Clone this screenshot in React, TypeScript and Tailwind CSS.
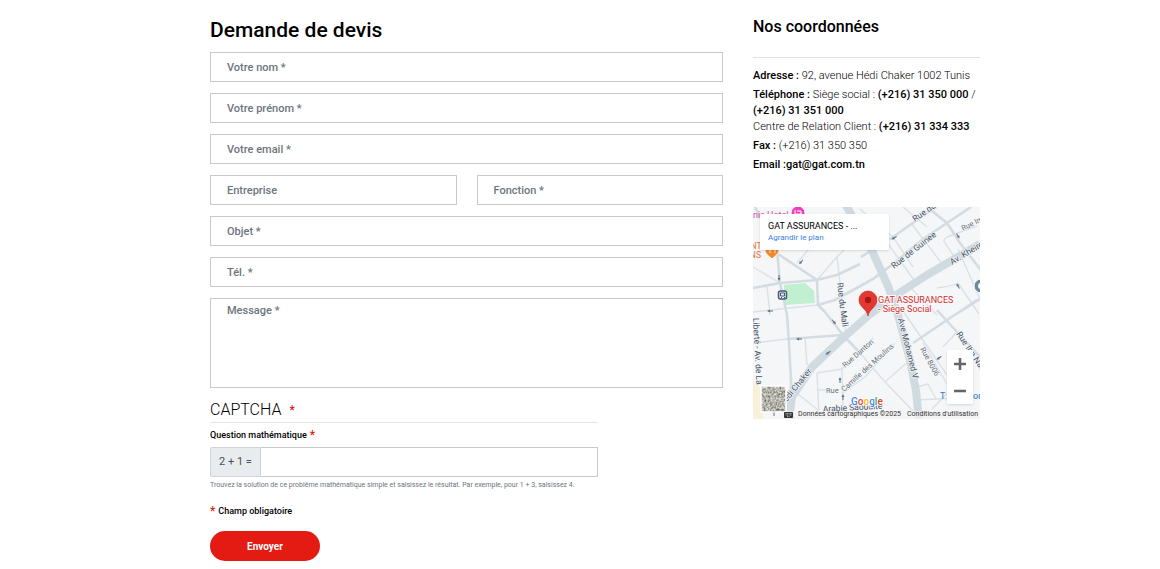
import type { ReactNode } from "react";

const fieldClass =
  "block h-[30px] w-full border border-[#c9c9c9] bg-white px-4 text-[11px] font-medium text-[#495057] outline-none placeholder:text-[#6c757d] placeholder:opacity-100";

function Field({ label, name, type = "text" }: { label: string; name: string; type?: string }) {
  return <input className={fieldClass} type={type} name={name} aria-label={label} placeholder={label} />;
}

function Star() {
  return <span className="text-xs leading-none font-medium text-[#e41b13]">*</span>;
}

function QuoteForm() {
  return (
    <form className="min-w-0" onSubmit={(e) => e.preventDefault()}>
      <h1 className="pt-4 pb-2 text-[21px] leading-7 font-medium">Demande de devis</h1>
      <div className="grid gap-[11px]">
        <Field label="Votre nom *" name="nom" />
        <Field label="Votre prénom *" name="prenom" />
        <Field label="Votre email *" name="email" type="email" />
        <div className="grid grid-cols-2 gap-5">
          <Field label="Entreprise" name="entreprise" />
          <Field label="Fonction *" name="fonction" />
        </div>
        <Field label="Objet *" name="objet" />
        <Field label="Tél. *" name="tel" type="tel" />
        <textarea
          className="block h-[90px] w-full resize-none border border-[#c9c9c9] px-4 py-1 text-[11px] leading-4 font-medium outline-none placeholder:text-[#6c757d] placeholder:opacity-100"
          name="message"
          aria-label="Message *"
          placeholder="Message *"
        />
      </div>
      <fieldset className="max-w-[388px] pt-2">
        <legend className="w-full pt-2">
          <span className="flex items-center gap-2 border-b border-[#e5e5e5] pt-1 pb-0.5 text-base leading-5 font-light">
            CAPTCHA <Star />
          </span>
        </legend>
        <label htmlFor="captcha" className="-mt-1 flex items-center gap-[3px] pb-1 text-[9px] leading-4 font-medium">
          Question mathématique <Star />
        </label>
        <div className="flex h-[30px]">
          <span className="flex items-center rounded-l-xs border border-[#ced4da] bg-[#e9ecef] px-2 text-[11px] text-[#495057]">
            2 + 1 =
          </span>
          <input id="captcha" name="captcha" className="min-w-0 flex-1 border border-l-0 border-[#c9c9c9] px-2 text-[11px] outline-none" />
        </div>
        <p className="pt-0.5 text-[7px] leading-3 text-[#6c757d]">
          Trouvez la solution de ce problème mathématique simple et saisissez le résultat. Par exemple, pour 1 + 3, saisissez 4.
        </p>
      </fieldset>
      <p className="flex items-center gap-[3px] py-3 text-[9px] leading-4 font-medium">
        <Star /> Champ obligatoire
      </p>
      <button type="submit" className="h-[30px] rounded-full bg-[#e41b13] px-[37px] text-[10px] font-bold text-white">
        Envoyer
      </button>
    </form>
  );
}

const minorRoads = [
  "M14 80 17 108", "M0 105 65 98", "M44 56 62 35", "M64 73 84 50 98 36", "M84 50 93 128",
  "M52 131 54 158", "M64 166 66 208", "M64 166 89 162 90 208", "M65 183 74 183", "M89 162 120 131",
  "M90 186 112 170 142 136", "M107 146 132 175 160 204", "M132 175 157 153", "M124 21 163 76",
  "M140 30 160 60", "M158 16 190 58", "M107 2 140 30", "M192 36Q189 33 194 30L224 19", "M192 36 205 55",
  "M157 80 184 108", "M184 81Q200 79 205 76L226 107", "M160 136 197 111 224 92", "M148 101 194 168",
  "M162 193 227 190", "M164 180 175 177 183 192", "M170 136 194 177", "M0 136 34 132", "M10 8 24 43",
  "M150 0 174 20", "M204 125 190 140", "M179 202 205 175", "M205 42 227 92", "M0 60 27 76", "M36 180 65 203",
];
const mediumRoads = [
  "M24 43 27 76 34 108 36 136 40 212", "M19 43 64 73 65 98 72 105 90 128 107 146", "M0 81 27 76 64 73 84 68 107 57",
  "M65 98 82 93 120 72 140 57 170 32 194 16 218 0", "M34 132 90 128", "M108 50 140 30 174 6 184 0",
  "M174 0 194 16 207 36 230 66", "M184 103 204 125 227 150", "M2 0 24 43", "M160 136 197 111 227 92",
];

const arrows: [number, number, number][] = [
  [48, 55, 130], [26, 71, 90], [17, 104, 180], [81, 115, 50], [46, 132, 180], [75, 146, 145], [141, 31, 150],
  [205, 29, 60], [205, 79, -120], [186, 151, 145], [87, 173, -90], [90, 190, -90], [21, 206, -90],
];

function MapLabel({ x, y, angle, children }: { x: number; y: number; angle: number; children: ReactNode }) {
  return <text x={x} y={y} transform={`rotate(${angle} ${x} ${y})`}>{children}</text>;
}

function MapDrawing() {
  return (
    <svg viewBox="0 0 227 212" className="block w-full" role="img" aria-label="Plan du quartier" fontFamily="Roboto, sans-serif">
      <defs>
        <filter id="aerial" x="0" y="0" width="1" height="1">
          <feTurbulence type="fractalNoise" baseFrequency="0.45" numOctaves="3" seed="8" />
          <feColorMatrix values="1.1 0 0 0 -.1  1.1 0 0 0 -.1  1.1 0 0 0 -.14  0 0 0 0 1" />
        </filter>
      </defs>
      <rect width="227" height="212" fill="#f5f6f7" />
      <path d="M0 173 9 184 10 212H0Z" fill="#f8f0d8" />
      <path d="M31 78 52 76 61 84 62 96 31 98Z" fill="#c1efd1" />
      <g fill="none" stroke="#dbe1e7" strokeLinejoin="round">
        {minorRoads.map((d) => <path key={d} d={d} strokeWidth="1.4" />)}
        {mediumRoads.map((d) => <path key={d} d={d} strokeWidth="2.6" stroke="#d4dce3" />)}
        <g stroke="#d0dae1">
          <path d="M36 212 39 190 59 160 91 130 116 108 143 88 174 68 227 37" strokeWidth="8" />
          <path d="M92 -3 116 37 135 79 145 108 157 153 163 184 166 212" strokeWidth="8" />
        </g>
      </g>
      <g fill="#60717f">
        {arrows.map(([x, y, a]) => (
          <path key={`${x}-${y}`} d="M-3-.5H0V-1.5L3 0 0 1.5V.5H-3Z" transform={`translate(${x} ${y}) rotate(${a})`} />
        ))}
      </g>
      <g fontSize="8.5" fill="#435365" stroke="#f5f6f7" strokeWidth="1.4" paintOrder="stroke">
        <MapLabel x={162} y={15} angle={-35}>Rue du</MapLabel>
        <MapLabel x={141} y={62} angle={-38}>Rue de Guinee</MapLabel>
        <MapLabel x={199} y={58} angle={-31}>Av. Kheireddine</MapLabel>
        <MapLabel x={84} y={76} angle={83}>Rue du Mali</MapLabel>
        <MapLabel x={145} y={112} angle={76}>Ave Mohamed V</MapLabel>
        <MapLabel x={30} y={200} angle={-51}>Hédi Chaker</MapLabel>
        <MapLabel x={0} y={111} angle={87}>Liberté - Av. de La</MapLabel>
        <MapLabel x={203} y={127} angle={56}>Rue Ibn Nadim</MapLabel>
        <text x="70" y="205" transform="rotate(-3 70 205)">Arabie Saoudite</text>
      </g>
      <g fontSize="7.5" fill="#68727c" stroke="#f5f6f7" strokeWidth="1.4" paintOrder="stroke">
        <MapLabel x={210} y={24} angle={-27}>Rue Imam</MapLabel>
        <MapLabel x={92} y={161} angle={-41}>Rue Danton</MapLabel>
        <text x="73" y="186">Rue</text>
        <MapLabel x={91} y={185} angle={-42}>Camille des Moulins</MapLabel>
        <MapLabel x={167} y={142} angle={61}>Rue 8006</MapLabel>
      </g>
      <text x="-5" y="11" fontSize="9" fill="#d944aa">unis Hotel</text>
      <path d="M38 6a7 7 0 1 1 14 0c0 4-4 6-7 9-3-3-7-5-7-9Z" fill="#ed3fb9" stroke="#fff" />
      <path d="M42 3v6M42 7h6V4h-4M48 6v3" fill="none" stroke="#fff" />
      <g fontSize="8.5" fill="#df7333"><text x="-8" y="42">ANT</text><text x="-9" y="51">ONS</text></g>
      <path d="M12 43a7 7 0 1 1 14 0c0 4-4 6-7 9-3-3-7-5-7-9Z" fill="#f28a2d" stroke="#fff" />
      <path d="M17 40v6M16 40v2h3v-2M22 40v6" fill="none" stroke="#fff" strokeWidth=".8" />
      <rect x="25.5" y="84" width="8" height="8" rx="2" fill="#e8eef4" stroke="#47586e" strokeWidth="1.5" />
      <path d="M27.5 86h4v3h-4zM28 91l1-1m3 1-1-1" fill="none" stroke="#47586e" />
      <circle cx="228" cy="79" r="7" fill="#708c98" stroke="#fff" /><circle cx="228" cy="79" r="3" fill="#fff" />
      <path d="M115 109c-1-7-9-9-9-16a9 9 0 0 1 18 0c0 7-8 9-9 16Z" fill="#e43932" stroke="#c62821" strokeWidth=".7" />
      <circle cx="115" cy="93" r="3.2" fill="#a31914" />
      <g fontSize="9" fill="#d3302f" stroke="#f8f8f8" strokeWidth="2" paintOrder="stroke">
        <text x="125" y="96">GAT ASSURANCES</text><text x="125" y="105">- Siège Social</text>
      </g>
      <text x="187" y="192" fontSize="9" fill="#3575ce">T</text>
      <text x="220" y="192" fontSize="9" fill="#3575ce">om</text>
      <rect x="8" y="179" width="25" height="26" fill="#777a70" filter="url(#aerial)" />
      <rect x="8" y="179" width="25" height="26" fill="none" stroke="#fff" strokeWidth="1.5" />
      <text x="98" y="198" fontSize="10" fontWeight="500" stroke="#fff" strokeWidth="1.5" paintOrder="stroke">
        <tspan fill="#4285f4">G</tspan><tspan fill="#ea4335">o</tspan><tspan fill="#fbbc05">o</tspan>
        <tspan fill="#4285f4">g</tspan><tspan fill="#34a853">l</tspan><tspan fill="#ea4335">e</tspan>
      </text>
      <path d="M30 204H227V212H30Z" fill="#f5f5f5" fillOpacity=".65" />
      <rect x="31" y="205" width="9" height="6" rx="1" fill="#333" />
      <path d="M32.5 206.5H39M32.5 208H39M34 209.6H37" stroke="#ddd" strokeWidth=".7" strokeDasharray="1 .5" />
    </svg>
  );
}

function CompanyMap() {
  return (
    <section aria-label="Carte" className="relative overflow-hidden">
      <MapDrawing />
      <div className="absolute top-[7px] left-[7px] w-[129px] rounded-[1px] bg-white px-2 py-1.5 shadow-sm">
        <p className="text-[9px] leading-3 whitespace-nowrap">GAT ASSURANCES - ...</p>
        <a href="#plan" className="block text-[8px] leading-3 text-[#3b7de0]">Agrandir le plan</a>
      </div>
      <div className="absolute right-[7px] bottom-[15px] grid w-[26px] grid-rows-2 rounded-[1px] bg-white shadow-sm">
        <button type="button" aria-label="Zoom avant" className="flex h-[27px] items-center justify-center">
          <svg width="12" height="12" viewBox="0 0 12 12"><path d="M0 6H12M6 0V12" stroke="#666" strokeWidth="2.6" /></svg>
        </button>
        <button type="button" aria-label="Zoom arrière" className="flex h-[27px] items-center justify-center">
          <svg width="12" height="12" viewBox="0 0 12 12"><path d="M0 6H12" stroke="#666" strokeWidth="2.6" /></svg>
        </button>
      </div>
      <div className="absolute right-0.5 bottom-0 flex gap-1.5 text-[7px] leading-[9px] whitespace-nowrap text-[#333]">
        <span>Données cartographiques ©2025</span>
        <a href="#conditions">Conditions d'utilisation</a>
      </div>
    </section>
  );
}

function ContactDetails() {
  return (
    <aside className="min-w-0">
      <h2 className="border-b border-[#e2e2e2] pt-4 pb-5 text-base leading-[21px] font-medium">Nos coordonnées</h2>
      <address className="grid gap-[3px] pt-[10px] pb-[34px] text-[11px] leading-4 font-light not-italic [&_b]:font-medium">
        <p><b>Adresse :</b> 92, avenue Hédi Chaker 1002 Tunis</p>
        <p>
          <b>Téléphone :</b> Siège social : <b>(+216) 31 350 000</b> / <b>(+216) 31 351 000</b>
          <br />
          Centre de Relation Client : <b>(+216) 31 334 333</b>
        </p>
        <p><b>Fax :</b> (+216) 31 350 350</p>
        <p><b>Email :<a href="mailto:gat@gat.com.tn">gat@gat.com.tn</a></b></p>
      </address>
      <CompanyMap />
    </aside>
  );
}

export default function App() {
  return (
    <main className="min-h-screen bg-white pl-[30px] font-[Roboto,sans-serif] text-black">
      <div className="mx-auto grid max-w-[770px] grid-cols-[513fr_227fr] gap-[30px]">
        <QuoteForm />
        <ContactDetails />
      </div>
    </main>
  );
}
